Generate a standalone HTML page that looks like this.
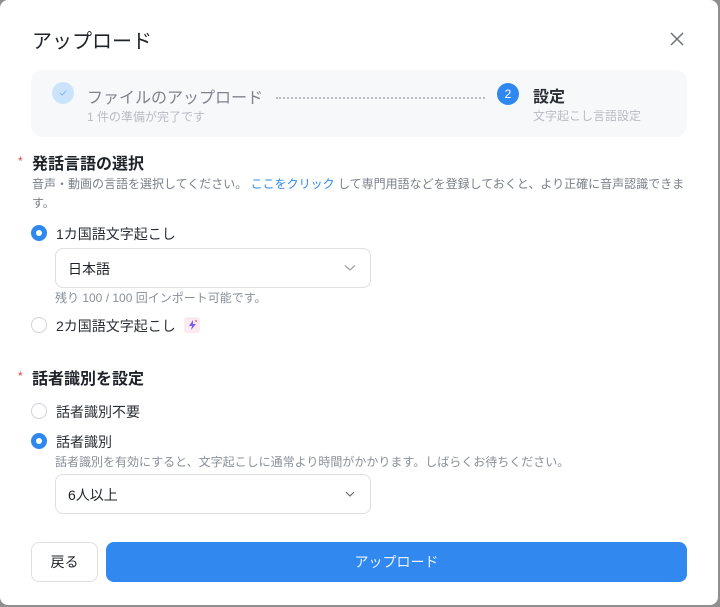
<!DOCTYPE html>
<html><head><meta charset="utf-8"><style>
*{margin:0;padding:0;box-sizing:border-box}
html,body{width:720px;height:607px;background:#8f8f8f;overflow:hidden}
body{font-family:"Liberation Sans","Noto Sans CJK JP",sans-serif;color:#1f2329;position:relative}
.dlg{position:absolute;left:0;top:0;width:718px;height:605px;background:#fff;border-radius:8px}
.a{position:absolute;white-space:nowrap}
.radio{position:absolute;width:16px;height:16px;border-radius:50%;border:1px solid #d0d3d8;background:#fff}
.radio.on{border:none;background:#2f88f0}
.radio.on::after{content:"";position:absolute;left:5px;top:5px;width:6px;height:6px;border-radius:50%;background:#fff}
.sel{position:absolute;left:55px;width:316px;height:40px;border:1px solid #dcdfe3;border-radius:8px;background:#fff}
.sel span{position:absolute;left:12px;top:10px;font-size:14px;color:#1f2329}
.sel svg{position:absolute;right:14px;top:15px}
.lab{font-size:14px;color:#2b2f36}
.hint{font-size:12px;color:#8a8f99}
.req{color:#f04545;font-size:12px}
.h{font-size:16px;font-weight:bold;color:#1f2329}
</style></head><body>
<div class="dlg">
<div class="a" style="left:32px;top:25px;font-size:20px;color:#1f2329">アップロード</div>
<svg class="a" style="left:670px;top:32px" width="14" height="14" viewBox="0 0 14 14"><path d="M1 1L13 13M13 1L1 13" stroke="#6b7078" stroke-width="1.5"/></svg>

<div class="a" style="left:31px;top:70px;width:656px;height:67px;background:#f7f8fa;border-radius:12px"></div>
<div class="a" style="left:52px;top:82px;width:22px;height:22px;border-radius:50%;background:#cbe4fb"></div>
<svg class="a" style="left:59px;top:89px" width="8" height="8" viewBox="0 0 8 8"><path d="M1 4L3 6L7 2" stroke="#7fb6ee" stroke-width="1" fill="none"/></svg>
<div class="a" style="left:87px;top:84px;font-size:16px;color:#7f848c">ファイルのアップロード</div>
<div class="a" style="left:87px;top:108px;font-size:12px;color:#b8bcc3">1 件の準備が完了です</div>
<div class="a" style="left:276px;top:97px;width:209px;border-top:2px dotted #b8bcc3"></div>
<div class="a" style="left:497px;top:83px;width:22px;height:22px;border-radius:50%;background:#2f88f0;color:#fff;font-size:12px;text-align:center;line-height:22px">2</div>
<div class="a" style="left:533px;top:83px;font-size:16px;font-weight:bold;color:#2b2f36">設定</div>
<div class="a" style="left:533px;top:107px;font-size:12px;color:#b8bcc3">文字起こし言語設定</div>

<div class="a req" style="left:18px;top:154px">*</div>
<div class="a h" style="left:32px;top:150px">発話言語の選択</div>
<div class="a hint" style="left:32px;top:175px;color:#7a7f88">音声・動画の言語を選択してください。 <span style="color:#2f88f0">ここをクリック</span> して専門用語などを登録しておくと、より正確に音声認識できま</div>
<div class="a hint" style="left:32px;top:194px;color:#7a7f88">す。</div>

<div class="radio on" style="left:31px;top:225px"></div>
<div class="a lab" style="left:56px;top:224px">1カ国語文字起こし</div>
<div class="sel" style="top:248px"><span>日本語</span><svg width="12" height="8" viewBox="0 0 12 8"><path d="M1 1.5L6 6L11 1.5" stroke="#9ca0a8" stroke-width="1.2" fill="none"/></svg></div>
<div class="a hint" style="left:55px;top:289px">残り 100 / 100 回インポート可能です。</div>
<div class="radio" style="left:31px;top:317px"></div>
<div class="a lab" style="left:56px;top:316px">2カ国語文字起こし</div>
<div class="a" style="left:184px;top:317px;width:16px;height:16px;border-radius:3px;background:#fbeaf0"></div>
<svg class="a" style="left:187px;top:319px" width="11" height="12" viewBox="0 0 11 12"><path d="M6 1L2 7H5L4 11L9 5H6Z" fill="#7b5cf0"/><circle cx="9" cy="2" r="1" fill="#f06a9a"/></svg>

<div class="a req" style="left:18px;top:369px">*</div>
<div class="a h" style="left:32px;top:365px">話者識別を設定</div>
<div class="radio" style="left:31px;top:403px"></div>
<div class="a lab" style="left:56px;top:402px">話者識別不要</div>
<div class="radio on" style="left:31px;top:433px"></div>
<div class="a lab" style="left:56px;top:432px">話者識別</div>
<div class="a hint" style="left:55px;top:453px">話者識別を有効にすると、文字起こしに通常より時間がかかります。しばらくお待ちください。</div>
<div class="sel" style="top:474px;height:40px"><span>6人以上</span><svg width="12" height="8" viewBox="0 0 12 8"><path d="M2 2L6 6L10 2" stroke="#6b7078" stroke-width="1.2" fill="none"/></svg></div>

<div class="a" style="left:31px;top:542px;width:67px;height:40px;border:1px solid #dcdfe3;border-radius:8px;font-size:14px;text-align:center;line-height:38px;color:#1f2329">戻る</div>
<div class="a" style="left:106px;top:542px;width:581px;height:40px;background:#3189f0;border-radius:8px;font-size:14px;text-align:center;line-height:40px;color:#eaf3fe">アップロード</div>
</div>
</body></html>
